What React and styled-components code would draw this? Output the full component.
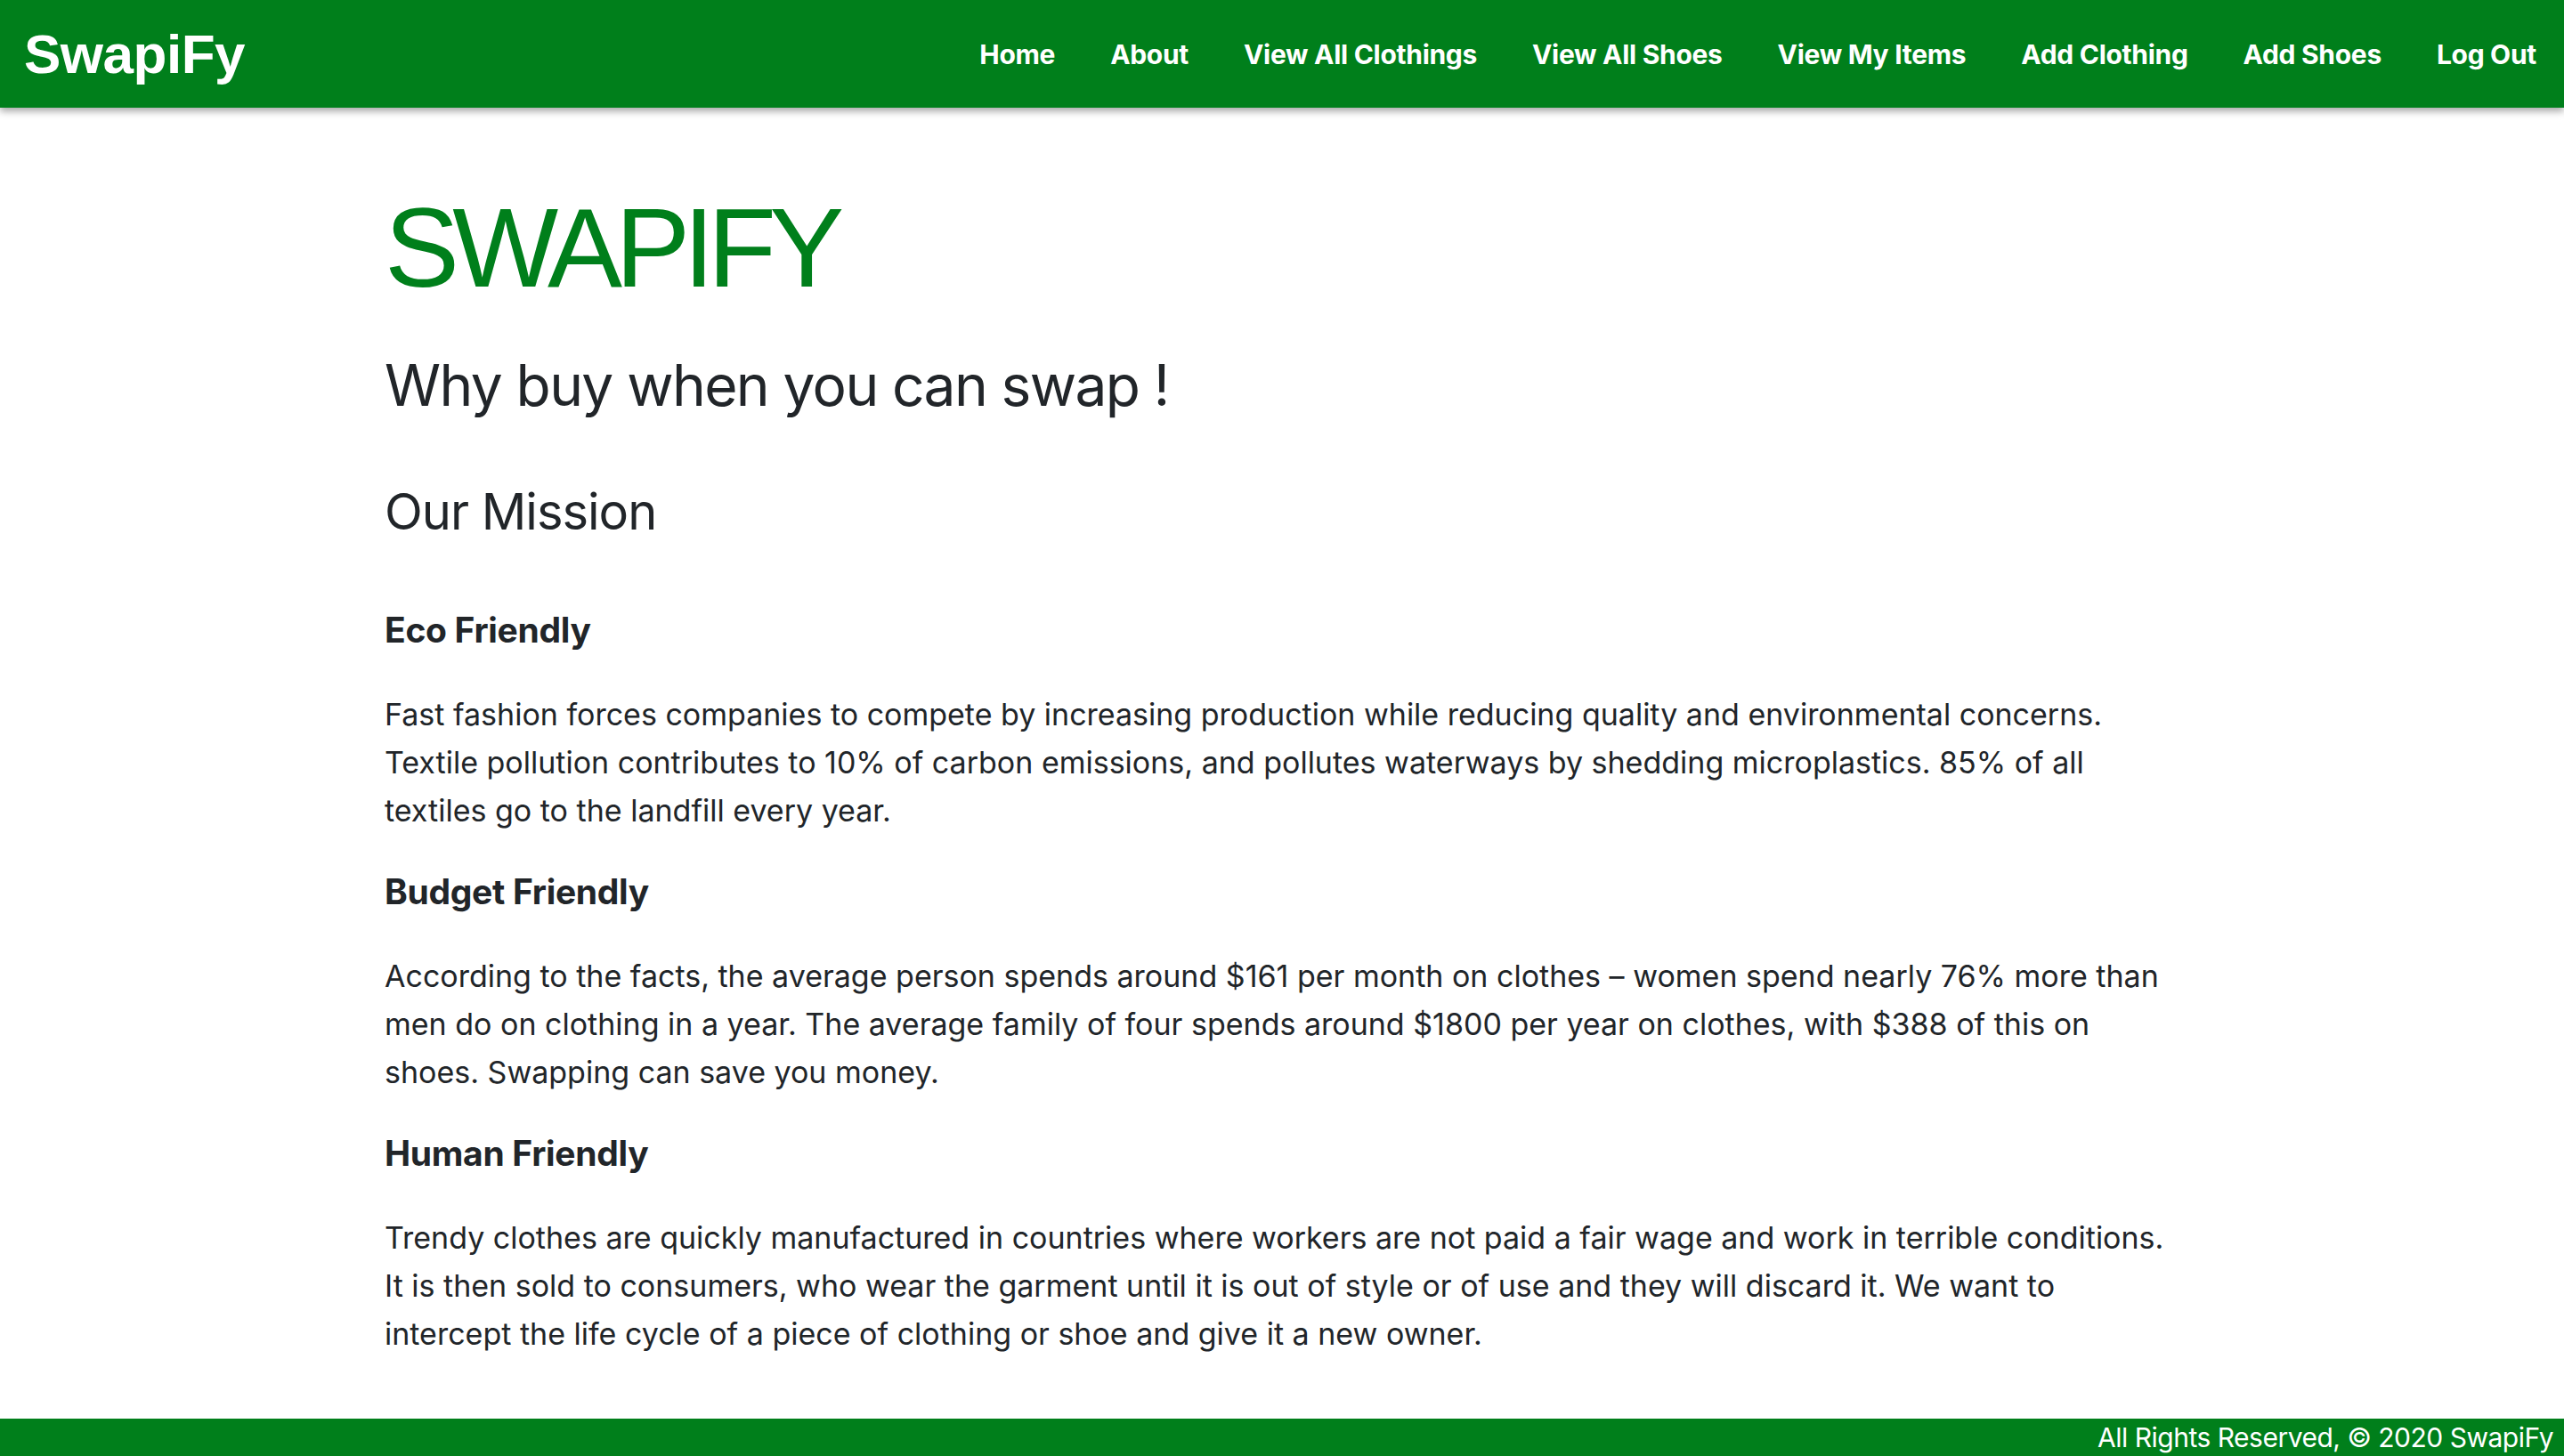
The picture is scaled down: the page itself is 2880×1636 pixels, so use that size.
import React from "react";
import styled, { createGlobalStyle } from "styled-components";

const GREEN = "#007f1b";
const TEXT = "#212529";

const Global = createGlobalStyle`
  html, body { margin: 0; padding: 0; background: #fff; }
  body {
    font-family: Inter, "Noto Sans", "DejaVu Sans", sans-serif;
    color: ${TEXT};
  }
  * { box-sizing: border-box; }
`;

const Page = styled.div`
  min-height: 100vh;
  display: flex;
  flex-direction: column;
`;

const NavBar = styled.nav`
  height: 121px;
  flex-shrink: 0;
  background: ${GREEN};
  display: flex;
  align-items: center;
  justify-content: space-between;
  padding: 0 31px 0 27px;
  box-shadow: 0 4px 8px rgba(0, 0, 0, 0.35);
  position: relative;
  z-index: 1;
`;

const Brand = styled.a`
  font-family: "Liberation Sans", Arial, sans-serif;
  font-weight: 700;
  font-size: 62px;
  color: #fff;
  text-decoration: none;
  letter-spacing: -0.5px;
`;

const NavLinks = styled.ul`
  list-style: none;
  margin: 0;
  padding: 0;
  display: flex;
  gap: 62px;
`;

const NavLink = styled.a`
  font-family: Inter, sans-serif;
  font-weight: 700;
  font-size: 30px;
  color: #fff;
  text-decoration: none;
  letter-spacing: -0.3px;
`;

const Main = styled.main`
  width: 70%;
  margin: 0 auto;
  padding-top: 82px;
  padding-bottom: 10px;
`;

const Title = styled.h1`
  font-family: "Liberation Sans", Arial, sans-serif;
  font-weight: 400;
  font-size: 126px;
  line-height: 1.2;
  color: ${GREEN};
  margin: 0 0 41px;
  letter-spacing: -7.7px;
`;

const Tagline = styled.h2`
  font-weight: 400;
  font-size: 64px;
  line-height: 1.2;
  margin: 0 0 70px;
  letter-spacing: -1.6px;
`;

const SectionTitle = styled.h3`
  font-weight: 400;
  font-size: 56px;
  line-height: 1.2;
  margin: 0 0 76px;
  letter-spacing: -1px;
`;

const Heading = styled.h5`
  font-weight: 700;
  font-size: 39px;
  line-height: 1.2;
  margin: 0 0 44px;
  letter-spacing: -0.3px;
`;

const Para = styled.p`
  font-size: 34px;
  line-height: 54px;
  margin: 0 0 41px;
  letter-spacing: 0;
`;

const Footer = styled.footer`
  margin-top: auto;
  height: 42px;
  flex-shrink: 0;
  background: ${GREEN};
  color: #fff;
  display: flex;
  align-items: center;
  justify-content: flex-end;
  padding: 0 12px;
  font-size: 30px;
  letter-spacing: -0.5px;
`;

const links = [
  "Home",
  "About",
  "View All Clothings",
  "View All Shoes",
  "View My Items",
  "Add Clothing",
  "Add Shoes",
  "Log Out",
];

const sections = [
  {
    title: "Eco Friendly",
    text:
      "Fast fashion forces companies to compete by increasing production while reducing quality and environmental concerns. Textile pollution contributes to 10% of carbon emissions, and pollutes waterways by shedding microplastics. 85% of all textiles go to the landfill every year.",
  },
  {
    title: "Budget Friendly",
    text:
      "According to the facts, the average person spends around $161 per month on clothes – women spend nearly 76% more than men do on clothing in a year. The average family of four spends around $1800 per year on clothes, with $388 of this on shoes. Swapping can save you money.",
  },
  {
    title: "Human Friendly",
    text:
      "Trendy clothes are quickly manufactured in countries where workers are not paid a fair wage and work in terrible conditions. It is then sold to consumers, who wear the garment until it is out of style or of use and they will discard it. We want to intercept the life cycle of a piece of clothing or shoe and give it a new owner.",
  },
];

export default function App() {
  return (
    <Page>
      <Global />
      <NavBar>
        <Brand href="#">SwapiFy</Brand>
        <NavLinks>
          {links.map((l) => (
            <li key={l}>
              <NavLink href="#">{l}</NavLink>
            </li>
          ))}
        </NavLinks>
      </NavBar>
      <Main>
        <Title>SWAPIFY</Title>
        <Tagline>Why buy when you can swap !</Tagline>
        <SectionTitle>Our Mission</SectionTitle>
        {sections.map((s) => (
          <section key={s.title}>
            <Heading>{s.title}</Heading>
            <Para>{s.text}</Para>
          </section>
        ))}
      </Main>
      <Footer>All Rights Reserved, © 2020 SwapiFy</Footer>
    </Page>
  );
}
